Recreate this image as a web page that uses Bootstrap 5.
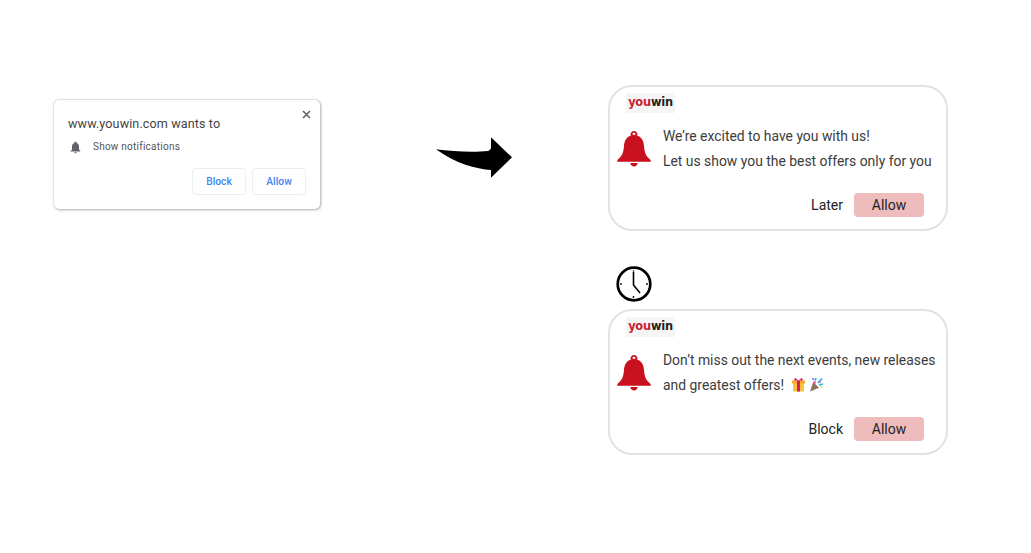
<!DOCTYPE html>
<html lang="en">
<head>
  <meta charset="UTF-8" />
  <title>Notification prompts</title>
  <meta name="viewport" content="width=device-width, initial-scale=1" />
  <link href="https://cdn.jsdelivr.net/npm/bootstrap@5.3.3/dist/css/bootstrap.min.css" rel="stylesheet">
  <style>
    html, body { height: 100%; }
    body { background: #fff; font-family: Roboto, "Liberation Sans", sans-serif; overflow: hidden; }
    .stage { height: 553px; }

    /* native browser prompt */
    .native-col { margin: 100px 0 0 54px; }
    .native-box { width: 266px; height: 109px; background: #fff; border-radius: 5px; box-shadow: 0 0 2px rgba(0,0,0,.3), 1px 1px 3px rgba(0,0,0,.25); padding: 16px 14px 14px 14px; position: relative; }
    .native-title { font-size: 12.6px; line-height: 15px; color: #444; letter-spacing: .1px; }
    .native-row { font-size: 10px; line-height: 14px; color: #555; margin-top: 9px; margin-left: 2px; gap: 12px; letter-spacing: .24px; }
    .native-close { position: absolute; top: 10px; right: 9px; line-height: 0; }
    .native-btn { width: 54px; height: 27px; padding: 0; font-size: 10.3px; font-weight: 500; color: #4285f4; background: #fff; border: 1px solid #eceef1; border-radius: 3px; }
    .native-btns { margin-top: 14px; gap: 6px; }

    .arrow-col { margin: 137px 0 0 116px; line-height: 0; }

    /* custom prompt */
    .custom-col { margin: 85px 0 0 96px; }
    .prompt-box { width: 340px; height: 146px; background: #fff; border: 2px solid #e2e2e2; border-radius: 24px; padding: 6px 16px 0 7px; }
    .logo-tag { width: 49px; height: 20px; margin-left: 9px; background: #f5f5f5; font-family: "DejaVu Sans", sans-serif; font-weight: 700; font-size: 11.4px; line-height: 19px; letter-spacing: -.2px; color: #222; text-align: center; white-space: nowrap; }
    .logo-tag span { color: #c9202f; }
    .prompt-body { margin-top: 10px; gap: 12px; }
    .prompt-text { font-size: 13.9px; line-height: 25px; color: #3c3c3c; white-space: nowrap; padding-top: 1px; }
    .prompt-actions { margin-top: 19px; margin-right: 6px; gap: 11px; font-size: 14px; color: #222; }
    .allow-btn { width: 70px; height: 24px; padding: 0; font-size: 14px; line-height: 24px; color: #222; background: #eebcbc; border: 0; border-radius: 4px; }
    .later-btn { padding: 0; font-size: 14px; line-height: 24px; color: #222; background: none; border: 0; }
    .clock-row { margin: 35px 0 7px 8px; line-height: 0; }
    .emoji-ico { vertical-align: -2px; margin-left: 3px; }
    .emoji-ico + .emoji-ico { margin-left: 0; }
  </style>
</head>
<body>
  <div class="stage d-flex align-items-start">

    <div class="native-col">
      <div class="native-box">
        <div class="native-close">
          <svg width="9" height="9" viewBox="0 0 9 9"><path d="M1 1l7 7M8 1l-7 7" stroke="#5f6368" stroke-width="1.6" fill="none"/></svg>
        </div>
        <div class="native-title">www.youwin.com wants to</div>
        <div class="native-row d-flex align-items-center">
          <svg width="11" height="13" viewBox="0 0 11 13"><path d="M5.5 0.5c.6 0 1 .4 1 1v.5c1.6.5 2.5 1.9 2.5 3.5v3l1.3 1.4v.6H.7v-.6L2 8.500v-3C2 3.900 2.900 2.500 4.500 2v-.5c0-.6.4-1 1-1zM4.200 11.300h2.600c0 .7-.6 1.200-1.300 1.200s-1.300-.5-1.300-1.200z" fill="#5f6368"/></svg>
          <span>Show notifications</span>
        </div>
        <div class="native-btns d-flex justify-content-end">
          <button type="button" class="btn native-btn">Block</button>
          <button type="button" class="btn native-btn">Allow</button>
        </div>
      </div>
    </div>

    <div class="arrow-col">
      <svg width="76" height="41" viewBox="0 0 76 41"><path d="M0 12.300C16 14.500 38 15.500 52 14 53.500 13.500 54.500 12.500 55 11.300V.3L76 20.300 55 40.700V33C40 32 20 27 0 12.300z" fill="#000"/></svg>
    </div>

    <div class="custom-col">
      <div class="prompt-box">
        <div class="logo-tag"><span>you</span>win</div>
        <div class="prompt-body d-flex align-items-center">
          <svg class="flex-shrink-0" width="34" height="36" viewBox="0 0 34 36"><path d="M17 0c1.900 0 3.400 1.400 3.400 3.100 0 .5-.1.900-.3 1.300 4.600 1.400 6.600 5.600 6.900 10.400.3 5.800 1.700 10.500 6.700 14.300v1.700H.3v-1.700c5-3.800 6.400-8.500 6.700-14.300.3-4.800 2.300-9 6.900-10.400-.2-.4-.3-.8-.3-1.300C13.600 1.400 15.100 0 17 0zm0 1.700c-.8 0-1.500.6-1.500 1.400 0 .3.100.6.200.8.400-.1.800-.1 1.300-.1s.900 0 1.300.1c.1-.2.200-.5.200-.8 0-.8-.7-1.400-1.500-1.400zM13.300 32h7.400c-.3 2-1.800 3.500-3.700 3.500s-3.400-1.500-3.700-3.500z" fill="#c8111c" fill-rule="evenodd"/></svg>
          <div class="prompt-text">We’re excited to have you with us!<br>Let us show you the best offers only for you</div>
        </div>
        <div class="prompt-actions d-flex justify-content-end align-items-center">
          <button type="button" class="btn later-btn">Later</button>
          <button type="button" class="btn allow-btn">Allow</button>
        </div>
      </div>

      <div class="clock-row">
        <svg width="36" height="36" viewBox="0 0 36 36">
          <circle cx="18" cy="18" r="16.300" fill="none" stroke="#000" stroke-width="2.700"/>
          <path d="M17.500 6V19L24 27" fill="none" stroke="#000" stroke-width="1.600"/>
          <circle cx="17.500" cy="5" r=".8"/><circle cx="17.500" cy="31" r=".9"/><circle cx="5" cy="18" r=".9"/><circle cx="31" cy="18" r=".9"/>
        </svg>
      </div>

      <div class="prompt-box">
        <div class="logo-tag"><span>you</span>win</div>
        <div class="prompt-body d-flex align-items-center">
          <svg class="flex-shrink-0" width="34" height="36" viewBox="0 0 34 36"><path d="M17 0c1.900 0 3.400 1.400 3.400 3.100 0 .5-.1.900-.3 1.300 4.600 1.400 6.600 5.600 6.900 10.400.3 5.800 1.700 10.500 6.700 14.300v1.700H.3v-1.700c5-3.800 6.400-8.500 6.700-14.300.3-4.800 2.300-9 6.900-10.400-.2-.4-.3-.8-.3-1.300C13.600 1.400 15.100 0 17 0zm0 1.700c-.8 0-1.500.6-1.500 1.400 0 .3.100.6.200.8.400-.1.800-.1 1.300-.1s.900 0 1.300.1c.1-.2.200-.5.200-.8 0-.8-.7-1.400-1.500-1.400zM13.300 32h7.400c-.3 2-1.800 3.500-3.700 3.500s-3.400-1.500-3.700-3.500z" fill="#c8111c" fill-rule="evenodd"/></svg>
          <div class="prompt-text">Don’t miss out the next events, new releases<br>and greatest offers!
            <svg class="emoji-ico" width="15" height="15" viewBox="0 0 15 15"><rect x="2" y="5" width="11" height="9.500" rx="1" fill="#f7c23c"/><rect x="1" y="3.500" width="13" height="3" rx=".6" fill="#f9a825"/><rect x="6" y="3.500" width="3" height="11" fill="#d81b60"/><path d="M7.500 3.500L4 .8 3 3.500zM7.500 3.500L11 .8l1 2.700z" fill="#d81b60"/></svg>
            <svg class="emoji-ico" width="15" height="15" viewBox="0 0 15 15"><path d="M1 14.500L4.200 5l5.800 5.800z" fill="#8d6e63"/><path d="M6 3.500l1-2.500M9 6l4-4.500M10 8l4-1" stroke="#2ab5f0" stroke-width="1.800" fill="none"/><circle cx="5.500" cy="5.500" r="1.500" fill="#f06292"/><circle cx="10.800" cy="5" r="1.100" fill="#f06292"/><circle cx="12.500" cy="10" r="1" fill="#ffca28"/><circle cx="4" cy="2" r=".9" fill="#7e57c2"/></svg>
          </div>
        </div>
        <div class="prompt-actions d-flex justify-content-end align-items-center">
          <button type="button" class="btn later-btn">Block</button>
          <button type="button" class="btn allow-btn">Allow</button>
        </div>
      </div>
    </div>

  </div>
  <script src="https://cdn.jsdelivr.net/npm/bootstrap@5.3.3/dist/js/bootstrap.bundle.min.js"></script>
</body>
</html>
